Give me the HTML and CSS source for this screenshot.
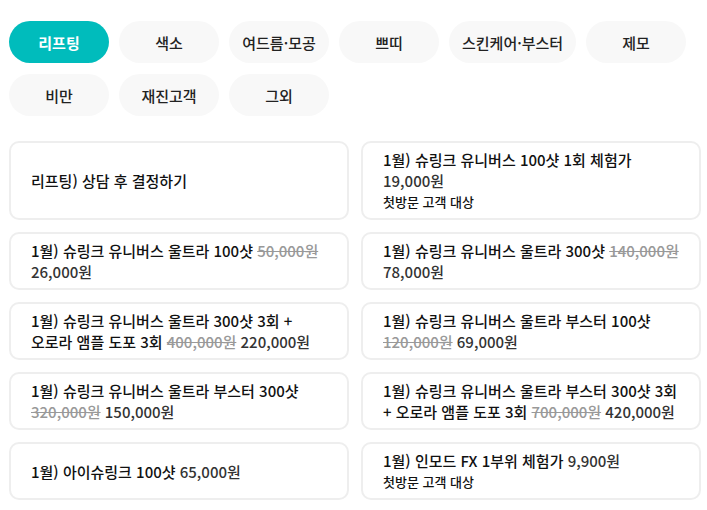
FILE: index.html
```html
<!DOCTYPE html>
<html lang="ko">

<head>
    <meta charset="UTF-8">
    <meta name="viewport" content="width=device-width, initial-scale=1.0">
    <title>이벤트</title>
    <link rel="stylesheet" href="styles.css">
</head>

<body>
    <div class="event-page">
        <div class="categories">
            <button class="category active">리프팅</button>
            <button class="category">색소</button>
            <button class="category">여드름·모공</button>
            <button class="category">쁘띠</button>
            <button class="category">스킨케어·부스터</button>
            <button class="category">제모</button>
            <button class="category">비만</button>
            <button class="category">재진고객</button>
            <button class="category">그외</button>
        </div>

        <div class="items">
            <div class="item">
                <p class="title">리프팅) 상담 후 결정하기</p>
            </div>
            <div class="item">
                <p class="title">1월) 슈링크 유니버스 100샷 1회 체험가 <span class="price">19,000원</span></p>
                <p class="note">첫방문 고객 대상</p>
            </div>
            <div class="item">
                <p class="title">1월) 슈링크 유니버스 울트라 100샷 <s class="old">50,000원</s> <span class="price">26,000원</span></p>
            </div>
            <div class="item">
                <p class="title">1월) 슈링크 유니버스 울트라 300샷 <s class="old">140,000원</s> <span class="price">78,000원</span></p>
            </div>
            <div class="item">
                <p class="title">1월) 슈링크 유니버스 울트라 300샷 3회 + 오로라 앰플 도포 3회 <s class="old">400,000원</s> <span class="price">220,000원</span></p>
            </div>
            <div class="item">
                <p class="title">1월) 슈링크 유니버스 울트라 부스터 100샷 <s class="old">120,000원</s> <span class="price">69,000원</span></p>
            </div>
            <div class="item">
                <p class="title">1월) 슈링크 유니버스 울트라 부스터 300샷 <s class="old">320,000원</s> <span class="price">150,000원</span></p>
            </div>
            <div class="item">
                <p class="title">1월) 슈링크 유니버스 울트라 부스터 300샷 3회 + 오로라 앰플 도포 3회 <s class="old">700,000원</s> <span class="price">420,000원</span></p>
            </div>
            <div class="item">
                <p class="title">1월) 아이슈링크 100샷 <span class="price">65,000원</span></p>
            </div>
            <div class="item">
                <p class="title">1월) 인모드 FX 1부위 체험가 <span class="price">9,900원</span></p>
                <p class="note">첫방문 고객 대상</p>
            </div>
        </div>
    </div>
</body>

</html>
```

FILE: styles.css
```css
body {
    font-family: "Noto Sans CJK KR", "Noto Sans", sans-serif;
    background-color: #fff;
    color: #111;
    margin: 0;
}

.event-page {
    padding: 21px 6px 10px 9px;
}

.categories {
    display: flex;
    flex-wrap: wrap;
    gap: 11px 10px;
}

.category {
    min-width: 100px;
    height: 42px;
    padding: 0 13px;
    background-color: #f8f8f8;
    color: #222;
    border: none;
    border-radius: 21px;
    font-family: inherit;
    font-size: 15px;
    font-weight: 500;
    cursor: pointer;
}

.category.active {
    background-color: #00bcbc;
    color: #fff;
    font-weight: 700;
}

.items {
    display: grid;
    grid-template-columns: 1fr 1fr;
    gap: 12px 12px;
    margin-top: 25px;
}

.item {
    display: flex;
    flex-direction: column;
    justify-content: center;
    padding: 6px 20px;
    border: 2px solid #eeeeee;
    border-radius: 10px;
    word-break: keep-all;
}

.title {
    margin: 0;
    font-size: 15px;
    font-weight: 500;
    line-height: 21px;
}

.price {
    color: #333;
}

.old {
    color: #999;
}

.note {
    margin: 0;
    font-size: 13px;
    font-weight: 500;
    line-height: 21px;
}
```
